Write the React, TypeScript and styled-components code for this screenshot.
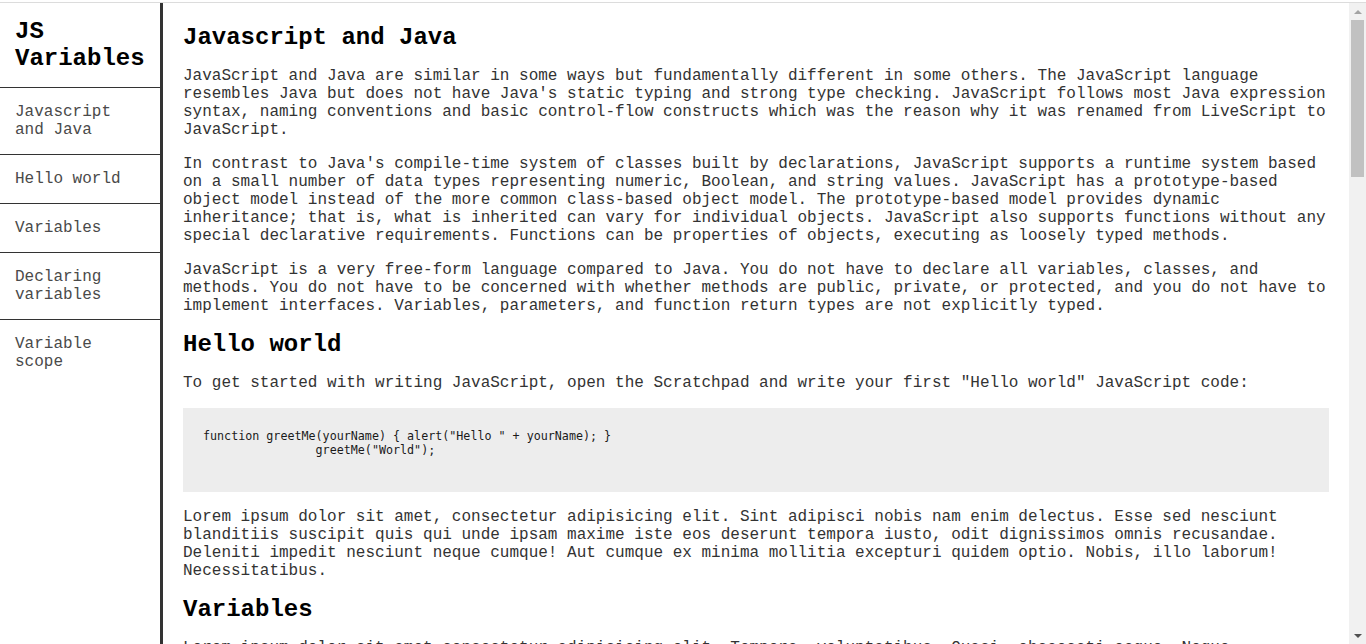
import React from "react";
import styled, { createGlobalStyle } from "styled-components";

const GlobalStyle = createGlobalStyle`
  html, body {
    margin: 0;
    padding: 0;
    background: #ffffff;
    overflow: hidden;
  }
  body {
    font-family: "Liberation Mono", "Courier New", monospace;
    color: #333333;
  }
  * { box-sizing: border-box; }
`;

const Frame = styled.div`
  margin-top: 2px;
  border-top: 1px solid #dcdcdc;
  height: 642px;
  display: flex;
  align-items: stretch;
  overflow: hidden;
`;

const Nav = styled.nav`
  flex: 0 0 163px;
  width: 163px;
  border-right: 3px solid #333333;
  display: flex;
  flex-direction: column;
  overflow: hidden;
`;

const NavTitle = styled.header`
  padding: 15px;
  font-size: 24px;
  font-weight: bold;
  color: #000000;
`;

const NavLink = styled.a`
  display: block;
  padding: 15px;
  border-top: 1px solid #333333;
  font-size: 16px;
  color: #4a4a4a;
  text-decoration: none;
`;

const Main = styled.main`
  flex: 1 1 auto;
  min-width: 0;
  height: 100%;
  overflow: hidden;
  padding: 21px 20px 40px;
`;

const Scrollbar = styled.div`
  flex: 0 0 17px;
  width: 17px;
  height: 100%;
  background: #f1f1f1;
  display: flex;
  flex-direction: column;
`;

const ScrollButton = styled.div`
  flex: 0 0 17px;
  height: 17px;
  display: flex;
  align-items: center;
  justify-content: center;
`;

const Arrow = styled.span<{ $dir: "up" | "down"; $color: string }>`
  display: block;
  width: 0;
  height: 0;
  border-left: 4px solid transparent;
  border-right: 4px solid transparent;
  ${(p) =>
    p.$dir === "up"
      ? `border-bottom: 4px solid ${p.$color};`
      : `border-top: 4px solid ${p.$color};`}
`;

const Track = styled.div`
  flex: 1 1 auto;
  padding: 0 2px;
`;

const Thumb = styled.div`
  height: 157px;
  background: #c1c1c1;
`;

const Section = styled.section`
  margin: 0;
`;

const SectionTitle = styled.header`
  font-size: 24px;
  font-weight: bold;
  color: #000000;
`;

const Para = styled.p`
  margin: 16px 0;
  font-size: 16px;
  color: #333333;
`;

const CodeBlock = styled.pre`
  margin: 16px 0;
  padding: 21px 20px 35px;
  background: #ededed;
  font-family: "DejaVu Sans Mono", Consolas, monospace;
  font-size: 11.7px;
  line-height: 14px;
  color: #1a1a1a;
  white-space: pre;
  overflow: hidden;
`;

type Sec = {
  id: string;
  title: string;
  blocks: { kind: "p" | "code"; text: string }[];
};

const sections: Sec[] = [
  {
    id: "Javascript_and_Java",
    title: "Javascript and Java",
    blocks: [
      {
        kind: "p",
        text: "JavaScript and Java are similar in some ways but fundamentally different in some others. The JavaScript language resembles Java but does not have Java's static typing and strong type checking. JavaScript follows most Java expression syntax, naming conventions and basic control-flow constructs which was the reason why it was renamed from LiveScript to JavaScript.",
      },
      {
        kind: "p",
        text: "In contrast to Java's compile-time system of classes built by declarations, JavaScript supports a runtime system based on a small number of data types representing numeric, Boolean, and string values. JavaScript has a prototype-based object model instead of the more common class-based object model. The prototype-based model provides dynamic inheritance; that is, what is inherited can vary for individual objects. JavaScript also supports functions without any special declarative requirements. Functions can be properties of objects, executing as loosely typed methods.",
      },
      {
        kind: "p",
        text: "JavaScript is a very free-form language compared to Java. You do not have to declare all variables, classes, and methods. You do not have to be concerned with whether methods are public, private, or protected, and you do not have to implement interfaces. Variables, parameters, and function return types are not explicitly typed.",
      },
    ],
  },
  {
    id: "Hello_world",
    title: "Hello world",
    blocks: [
      {
        kind: "p",
        text: 'To get started with writing JavaScript, open the Scratchpad and write your first "Hello world" JavaScript code:',
      },
      {
        kind: "code",
        text: 'function greetMe(yourName) { alert("Hello " + yourName); }\n                greetMe("World");',
      },
      {
        kind: "p",
        text: "Lorem ipsum dolor sit amet, consectetur adipisicing elit. Sint adipisci nobis nam enim delectus. Esse sed nesciunt blanditiis suscipit quis qui unde ipsam maxime iste eos deserunt tempora iusto, odit dignissimos omnis recusandae. Deleniti impedit nesciunt neque cumque! Aut cumque ex minima mollitia excepturi quidem optio. Nobis, illo laborum! Necessitatibus.",
      },
    ],
  },
  {
    id: "Variables",
    title: "Variables",
    blocks: [
      {
        kind: "p",
        text: "Lorem ipsum dolor sit amet consectetur adipisicing elit. Tempora, voluptatibus. Quasi, obcaecati eaque. Neque temporibus iste ipsam, voluptate soluta tempore accusantium magni commodi, laudantium ducimus explicabo. Ipsa minima laudantium repudiandae!",
      },
      {
        kind: "p",
        text: "You use variables as symbolic names for values in your application. The names of variables, called identifiers, conform to certain rules.",
      },
    ],
  },
  {
    id: "Declaring_variables",
    title: "Declaring variables",
    blocks: [
      { kind: "p", text: "You can declare a variable in three ways:" },
      {
        kind: "p",
        text: "With the keyword var. For example, var x = 42. This syntax can be used to declare both local and global variables.",
      },
    ],
  },
  {
    id: "Variable_scope",
    title: "Variable scope",
    blocks: [
      {
        kind: "p",
        text: "When you declare a variable outside of any function, it is called a global variable, because it is available to any other code in the current document. When you declare a variable within a function, it is called a local variable, because it is available only within that function.",
      },
    ],
  },
];

const navItems = [
  { id: "Javascript_and_Java", label: "Javascript and Java" },
  { id: "Hello_world", label: "Hello world" },
  { id: "Variables", label: "Variables" },
  { id: "Declaring_variables", label: "Declaring variables" },
  { id: "Variable_scope", label: "Variable scope" },
];

export default function App() {
  return (
    <>
      <GlobalStyle />
      <Frame>
        <Nav id="navbar">
          <NavTitle>JS Variables</NavTitle>
          {navItems.map((n) => (
            <NavLink key={n.id} className="nav-link" href={`#${n.id}`}>
              {n.label}
            </NavLink>
          ))}
        </Nav>
        <Main id="main-doc">
          {sections.map((s) => (
            <Section key={s.id} className="main-section" id={s.id}>
              <SectionTitle>{s.title}</SectionTitle>
              {s.blocks.map((b, i) =>
                b.kind === "p" ? (
                  <Para key={i}>{b.text}</Para>
                ) : (
                  <CodeBlock key={i}>
                    <code>{b.text}</code>
                  </CodeBlock>
                )
              )}
            </Section>
          ))}
        </Main>
        <Scrollbar aria-hidden="true">
          <ScrollButton>
            <Arrow $dir="up" $color="#a3a3a3" />
          </ScrollButton>
          <Track>
            <Thumb />
          </Track>
          <ScrollButton>
            <Arrow $dir="down" $color="#505050" />
          </ScrollButton>
        </Scrollbar>
      </Frame>
    </>
  );
}
